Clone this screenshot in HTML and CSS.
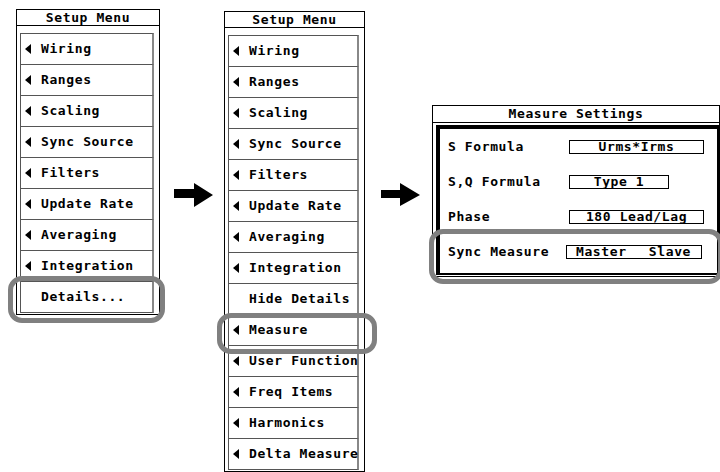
FILE: index.html
```html
<!DOCTYPE html>
<html>
<head>
  <meta http-equiv="Content-type" content="text/html; charset=utf-8">
  <title>Setup Menu</title>
<link rel="stylesheet" href="styles.css">
</head>

<body>
  <div class="stage">

    <div class="menu menu-one">
      <div class="menu-title">Setup Menu</div>
      <ul class="items">
        <li class="item sub">Wiring</li>
        <li class="item sub">Ranges</li>
        <li class="item sub">Scaling</li>
        <li class="item sub">Sync Source</li>
        <li class="item sub">Filters</li>
        <li class="item sub">Update Rate</li>
        <li class="item sub">Averaging</li>
        <li class="item sub">Integration</li>
        <li class="item">Details...</li>
      </ul>
      <div class="ring ring-details"></div>
    </div>

    <svg class="arrow arrow-one" width="40" height="24" viewBox="0 0 40 24">
      <polygon points="0,6 20,6 20,0 39,12 20,24 20,15 0,15" fill="#000"/>
    </svg>

    <div class="menu menu-two">
      <div class="menu-title">Setup Menu</div>
      <ul class="items">
        <li class="item sub">Wiring</li>
        <li class="item sub">Ranges</li>
        <li class="item sub">Scaling</li>
        <li class="item sub">Sync Source</li>
        <li class="item sub">Filters</li>
        <li class="item sub">Update Rate</li>
        <li class="item sub">Averaging</li>
        <li class="item sub">Integration</li>
        <li class="item">Hide Details</li>
        <li class="item sub">Measure</li>
        <li class="item sub">User Function</li>
        <li class="item sub">Freq Items</li>
        <li class="item sub">Harmonics</li>
        <li class="item sub">Delta Measure</li>
      </ul>
      <div class="ring ring-measure"></div>
    </div>

    <svg class="arrow arrow-two" width="40" height="24" viewBox="0 0 40 24">
      <polygon points="0,7 19,7 19,0 39,12 19,23 19,15 0,15" fill="#000"/>
    </svg>

    <div class="dialog">
      <div class="dialog-title">Measure Settings</div>
      <div class="panel">
        <div class="row">
          <span class="label">S Formula</span>
          <span class="value">Urms*Irms</span>
        </div>
        <div class="row">
          <span class="label">S,Q Formula</span>
          <span class="value short">Type 1</span>
        </div>
        <div class="row">
          <span class="label">Phase</span>
          <span class="value">180 Lead/Lag</span>
        </div>
        <div class="row">
          <span class="label">Sync Measure</span>
          <span class="value split"><span>Master</span><span>Slave</span></span>
        </div>
      </div>
      <div class="ring ring-sync"></div>
    </div>

  </div>
</body>
</html>
```

FILE: styles.css
```css
body {
  margin: 0;
  background: #fff;
  color: #000;
  font-family: "DejaVu Sans Mono", "Liberation Mono", monospace;
  font-weight: bold;
  font-size: 13px;
  letter-spacing: 0.6px;
}

.stage {
  display: flex;
  align-items: flex-start;
  width: 720px;
  height: 472px;
  overflow: hidden;
}

/* setup menus */
.menu {
  position: relative;
  box-sizing: border-box;
  border: 1px solid #000;
}
.menu-one {
  width: 145px;
  margin: 9px 0 0 16px;
}
.menu-two {
  width: 141px;
  margin: 11px 0 0 10px;
}
.menu-title {
  height: 15px;
  line-height: 15px;
  text-align: center;
  border-bottom: 1px solid #000;
}
.items {
  list-style: none;
  margin: 0;
  padding: 7px 5px 1px 3px;
}
.item {
  position: relative;
  height: 30px;
  line-height: 30px;
  padding-left: 20px;
  border-top: 1px solid #555;
  border-left: 1px solid #555;
  border-right: 2px solid #888;
  white-space: nowrap;
}
.item:last-child {
  border-bottom: 1px solid #555;
}
.sub::before {
  content: "";
  position: absolute;
  left: 4px;
  top: 10px;
  border-right: 6px solid #000;
  border-top: 5px solid transparent;
  border-bottom: 5px solid transparent;
}

/* arrows */
.arrow {
  flex: none;
  margin-top: 183px;
}
.arrow-one {
  margin-left: 14px;
}
.arrow-two {
  margin-left: 16px;
}

/* dialog */
.dialog {
  position: relative;
  box-sizing: border-box;
  width: 288px;
  margin: 105px 0 0 11px;
  border: 1px solid #000;
  flex: none;
}
.dialog-title {
  height: 16px;
  line-height: 16px;
  text-align: center;
  border-bottom: 1px solid #000;
}
.panel {
  margin: 2px 0 1px 3px;
  border-top: 4px solid #000;
  border-left: 4px solid #000;
  border-right: 2px solid #000;
  border-bottom: 2px solid #000;
  padding: 0 0 4px 8px;
}
.row {
  display: flex;
  align-items: center;
  height: 35px;
}
.label {
  width: 121px;
  flex: none;
}
.value {
  box-sizing: border-box;
  width: 135px;
  height: 14px;
  line-height: 12px;
  border: 1px solid #000;
  text-align: center;
}
.value.short {
  width: 100px;
}
.value.split {
  display: flex;
  justify-content: space-between;
  padding: 0 10px 0 9px;
  width: 136px;
  margin-left: -3px;
}

/* highlight rings */
.ring {
  position: absolute;
  box-sizing: border-box;
  border: 5px solid #808080;
  border-radius: 14px;
}
.ring-details {
  left: -9px;
  top: 266px;
  width: 157px;
  height: 47px;
}
.ring-measure {
  left: -8px;
  top: 301px;
  width: 160px;
  height: 41px;
}
.ring-sync {
  left: -4px;
  top: 123px;
  width: 294px;
  height: 55px;
}
```
